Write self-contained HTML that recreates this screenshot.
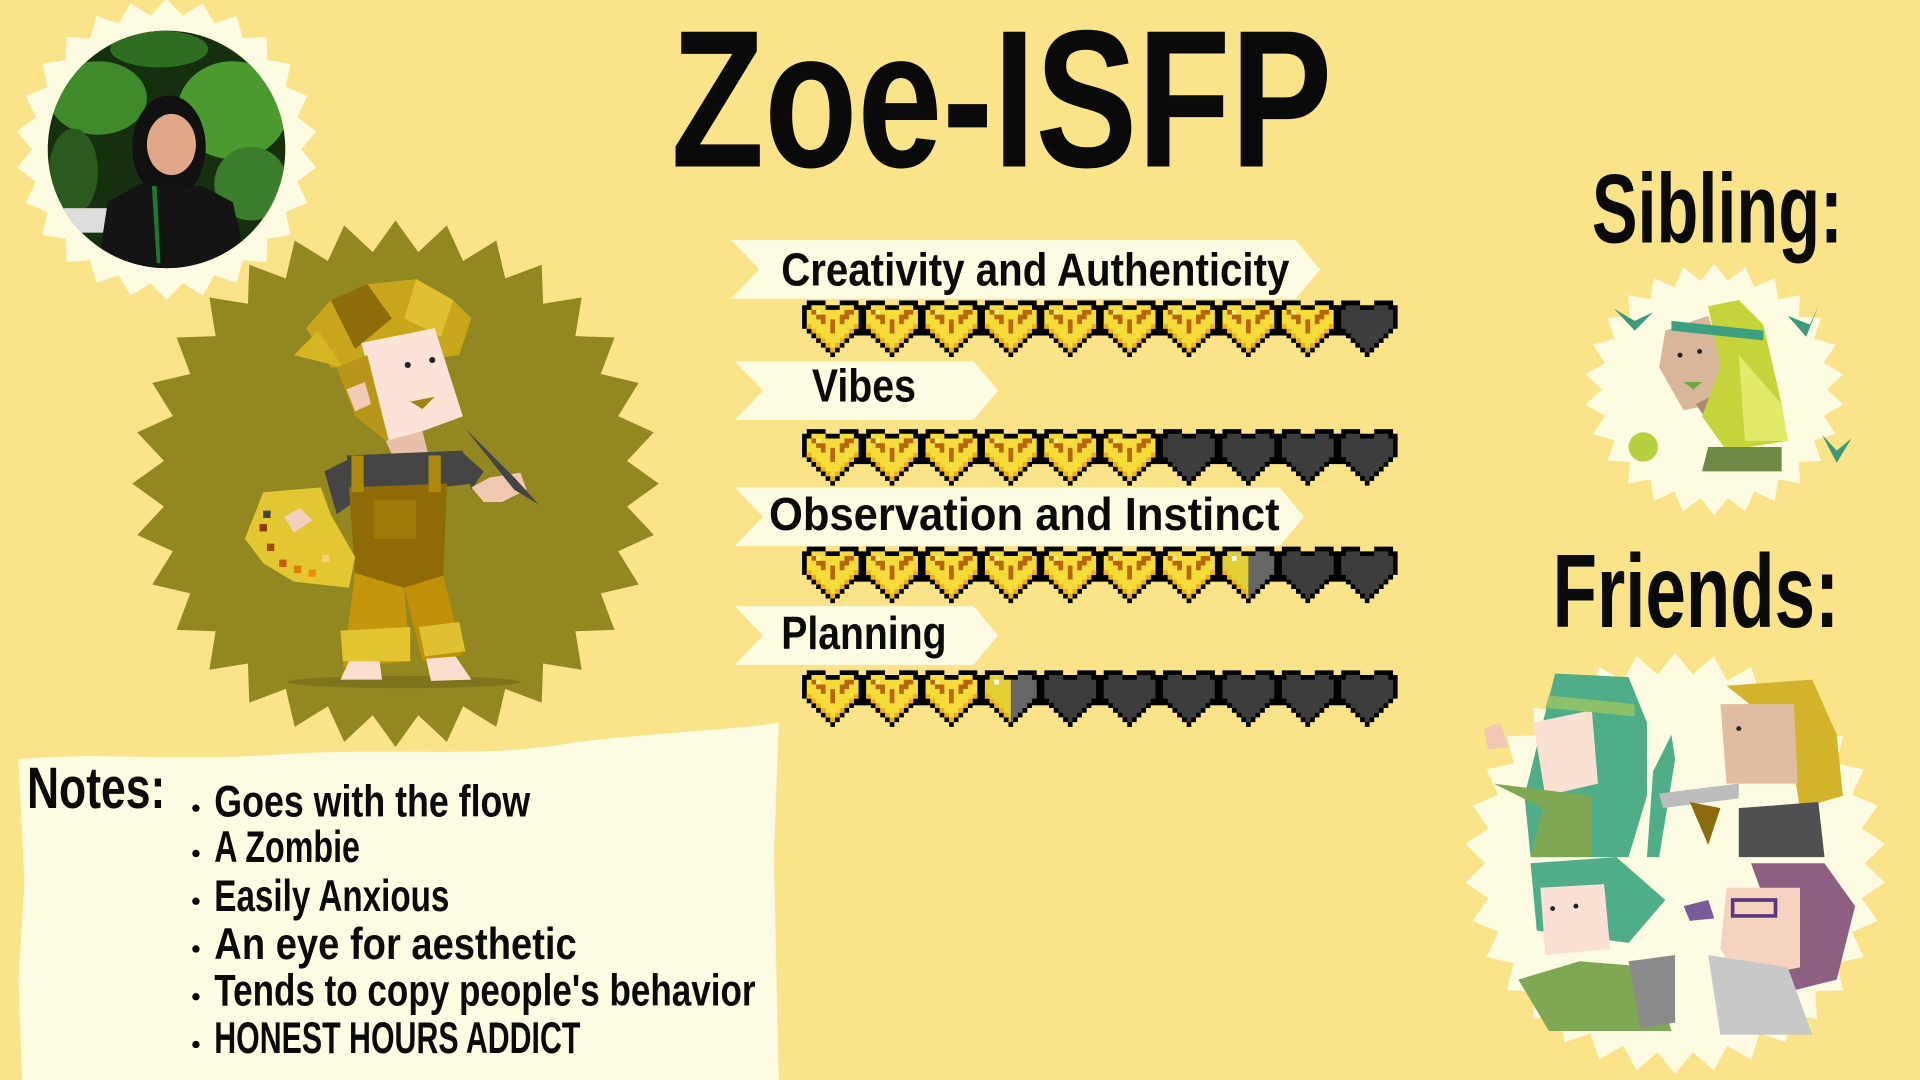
<!DOCTYPE html>
<html><head><meta charset="utf-8"><style>
html,body{margin:0;padding:0;background:#fae389;}
svg{display:block}
.h{font-family:"Liberation Sans",sans-serif;font-weight:bold;fill:#0a0a0a}
.n{font-family:"Liberation Sans",sans-serif;fill:#0a0a0a;font-weight:bold}
</style></head><body>
<svg width="1920" height="1080" viewBox="0 0 1568 882" xmlns="http://www.w3.org/2000/svg">
<defs>
<symbol id="hg" viewBox="0 0 13 12">
<path fill="#000" d="M1,0H5V1H8V0H12V1H13V6H12V7H11V8H10V9H9V10H8V11H7V12H6V11H5V10H4V9H3V8H2V7H1V6H0V1H1Z"/>
<path fill="#f6dc3a" d="M2,1H5V2H8V1H11V2H12V6H11V7H10V8H9V9H8V10H7V11H6V10H5V9H4V8H3V7H2V6H1V2H2Z"/>
<path fill="#efb012" d="M1,5H2V6H3V7H4V8H5V9H6V10H7V9H8V8H9V7H10V6H11V5H12V6H11V7H10V8H9V9H8V10H7V11H6V10H5V9H4V8H3V7H2V6H1Z"/>
<path fill="#b8660c" d="M2,2H4V3H5V5H4V4H3V3H2Z M11,2H9V3H8V5H9V4H10V3H11Z M6,4H7V7H6Z"/>
<rect x="3" y="2" width="1" height="1" fill="#fff27a"/>
</symbol>
<symbol id="hd" viewBox="0 0 13 12">
<path fill="#000" d="M1,0H5V1H8V0H12V1H13V6H12V7H11V8H10V9H9V10H8V11H7V12H6V11H5V10H4V9H3V8H2V7H1V6H0V1H1Z"/>
<path fill="#3d3d3d" d="M2,1H5V2H8V1H11V2H12V6H11V7H10V8H9V9H8V10H7V11H6V10H5V9H4V8H3V7H2V6H1V2H2Z"/>
</symbol>
<symbol id="hh" viewBox="0 0 13 12">
<path fill="#000" d="M1,0H5V1H8V0H12V1H13V6H12V7H11V8H10V9H9V10H8V11H7V12H6V11H5V10H4V9H3V8H2V7H1V6H0V1H1Z"/>
<path fill="#666" d="M2,1H5V2H8V1H11V2H12V6H11V7H10V8H9V9H8V10H7V11H6V10H5V9H4V8H3V7H2V6H1V2H2Z"/>
<path fill="#e2cf36" d="M2,1H5V2H6.5V10H5V9H4V8H3V7H2V6H1V2H2Z"/>
<path fill="#efb012" d="M1,5H2V6H3V7H4V8H5V9H6V10H6.5V11H6V10H5V9H4V8H3V7H2V6H1Z"/>
<rect x="3" y="2" width="1" height="1" fill="#fff"/>
</symbol>
<clipPath id="pc"><circle cx="136" cy="122" r="97"/></clipPath>
</defs>

<rect width="1568" height="882" fill="#fae389"/>

<polygon id="s1" fill="#fefbe3"/>
<g clip-path="url(#pc)">
<rect x="30" y="20" width="220" height="210" fill="#16300f"/>
<ellipse cx="80" cy="80" rx="40" ry="30" fill="#3f8a2a"/>
<ellipse cx="190" cy="90" rx="45" ry="40" fill="#4a9a30"/>
<ellipse cx="130" cy="40" rx="40" ry="15" fill="#2f6e22"/>
<ellipse cx="205" cy="150" rx="30" ry="30" fill="#3a7d2a"/>
<ellipse cx="60" cy="140" rx="20" ry="35" fill="#2a5a1e"/>
<rect x="52" y="170" width="40" height="20" fill="#ddd"/>
<ellipse cx="138" cy="120" rx="30" ry="42" fill="#111"/>
<ellipse cx="140" cy="118" rx="20" ry="25" fill="#e0a888"/>
<path d="M78,230 L88,165 L115,150 L165,152 L190,165 L205,230 Z" fill="#141414"/>
<path d="M124,152 L128,215 L131,215 L128,152Z" fill="#1c7a30"/>
</g>

<polygon id="s2" fill="#938721"/>
<g>
<ellipse cx="330" cy="557" rx="95" ry="5" fill="#7e741b"/>
<path d="M250,268 L270,245 L300,232 L340,228 L370,245 L385,260 L375,290 L300,300 L270,300 Z" fill="#c9a51c"/>
<path d="M270,245 L300,232 L320,260 L290,285Z" fill="#8c6d0a"/>
<path d="M340,228 L370,245 L360,275 L330,260Z" fill="#e0c030"/>
<path d="M240,290 L260,270 L280,300Z" fill="#d6b422"/>
<path d="M295,280 L355,268 L378,340 L318,362 Z" fill="#fbe3d7"/>
<path d="M275,300 L300,290 L318,362 L290,340Z" fill="#b9961a"/>
<path d="M283,318 L298,312 L303,330 L290,336Z" fill="#f1cbb5"/>
<circle cx="333" cy="298" r="2.5" fill="#222"/><circle cx="353" cy="294" r="2.5" fill="#222"/>
<path d="M335,328 L355,324 L345,334Z" fill="#a08410"/>
<path d="M315,360 L345,352 L350,372 L325,382 Z" fill="#e8bfa8"/>
<path d="M283,372 L330,370 L378,368 L385,395 L345,400 L290,400 Z" fill="#454545"/>
<path d="M265,385 L285,375 L292,408 L275,420Z" fill="#454545"/>
<path d="M378,370 L395,385 L385,400Z" fill="#454545"/>
<path d="M285,398 L365,395 L362,470 L330,480 L290,470 Z" fill="#8f6a06"/>
<rect x="287" y="372" width="10" height="30" fill="#b0890c"/>
<rect x="350" y="372" width="10" height="30" fill="#b0890c"/>
<rect x="305" y="408" width="35" height="32" fill="#a07a08"/>
<path d="M290,468 L330,480 L335,540 L280,545Z" fill="#c4960c"/>
<path d="M330,480 L362,470 L378,535 L345,540Z" fill="#c09008"/>
<path d="M278,515 L335,512 L335,540 L280,540Z" fill="#e3c430"/>
<path d="M342,512 L375,508 L380,532 L347,536Z" fill="#e0c030"/>
<path d="M285,540 L310,540 L312,555 L278,555Z" fill="#fbe0d0"/>
<path d="M348,538 L372,536 L385,555 L352,556Z" fill="#fbe0d0"/>
<path d="M385,398 L400,390 L425,386 L430,400 L410,410 L395,410Z" fill="#f3c8b0"/>
<path d="M380,350 L420,390 L440,412 L420,400Z" fill="#444"/>
<path d="M200,440 L215,402 L262,398 L270,420 L290,455 L285,480 L240,475 L215,460 Z" fill="#e2c632"/>
<g fill="#8a3a0a"><rect x="215" y="417" width="6" height="6" fill="#444"/><rect x="212" y="428" width="6" height="6"/><rect x="218" y="444" width="6" height="6" fill="#a34a05"/><rect x="228" y="457" width="6" height="6" fill="#c85a05"/><rect x="240" y="462" width="6" height="6" fill="#e07a05"/><rect x="252" y="465" width="6" height="6" fill="#f09010"/><rect x="263" y="453" width="6" height="6" fill="#f7d070"/></g>
<path d="M232,422 L245,415 L255,425 L240,435Z" fill="#f3d0c0"/>
</g>

<text class="h" x="548" y="136" font-size="160" textLength="540" lengthAdjust="spacingAndGlyphs">Zoe-ISFP</text>

<g fill="#fefbe3">
<polygon points="597,196 1058,196 1078,220 1058,244 597,244 620,220"/>
<polygon points="600,295 795,295 815,319 795,343 600,343 623,319"/>
<polygon points="600,398 1045,398 1065,422 1045,446 600,446 623,422"/>
<polygon points="600,495 795,495 815,519 795,543 600,543 623,519"/>
</g>
<text class="n" x="638" y="233" font-size="38" textLength="415" lengthAdjust="spacingAndGlyphs">Creativity and Authenticity</text>
<text class="n" x="663" y="328" font-size="38" textLength="85" lengthAdjust="spacingAndGlyphs">Vibes</text>
<text class="n" x="628" y="433" font-size="38" textLength="417" lengthAdjust="spacingAndGlyphs">Observation and Instinct</text>
<text class="n" x="638" y="530" font-size="38" textLength="135" lengthAdjust="spacingAndGlyphs">Planning</text>

<g id="hearts"></g>

<path d="M15,620 C80,614 150,622 230,616 C320,610 400,620 470,606 C540,598 600,596 636,590 L632,700 L636,882 L18,882 L15,800 L20,720 Z" fill="#fefbe3"/>
<text class="n" x="22" y="660" font-size="48" textLength="113" lengthAdjust="spacingAndGlyphs">Notes:</text>
<g class="n" font-size="36">
<circle cx="160" cy="660" r="3" fill="#000"/><text x="175" y="667" textLength="258" lengthAdjust="spacingAndGlyphs">Goes with the flow</text>
<circle cx="160" cy="697" r="3" fill="#000"/><text x="175" y="704" textLength="119" lengthAdjust="spacingAndGlyphs">A Zombie</text>
<circle cx="160" cy="736" r="3" fill="#000"/><text x="175" y="744" textLength="192" lengthAdjust="spacingAndGlyphs">Easily Anxious</text>
<circle cx="160" cy="775" r="3" fill="#000"/><text x="175" y="783" textLength="296" lengthAdjust="spacingAndGlyphs">An eye for aesthetic</text>
<circle cx="160" cy="814" r="3" fill="#000"/><text x="175" y="821" textLength="442" lengthAdjust="spacingAndGlyphs">Tends to copy people's behavior</text>
<circle cx="160" cy="853" r="3" fill="#000"/><text x="175" y="860" textLength="299" lengthAdjust="spacingAndGlyphs">HONEST HOURS ADDICT</text>
</g>

<text class="h" x="1300" y="198" font-size="80" textLength="205" lengthAdjust="spacingAndGlyphs">Sibling:</text>
<polygon id="s3" fill="#fefbe3"/>
<g>
<path d="M1360,270 L1395,258 L1410,300 L1400,330 L1375,335 L1355,300Z" fill="#d9b59a"/>
<path d="M1385,330 L1405,320 L1410,345 L1395,345Z" fill="#a88870"/>
<path d="M1395,250 L1420,245 L1440,265 L1455,330 L1460,360 L1410,368 L1390,340 L1405,300Z" fill="#c5d43a"/>
<path d="M1420,290 L1455,330 L1460,360 L1425,360Z" fill="#e2ea6a"/>
<path d="M1365,262 L1440,270 L1440,278 L1365,270Z" fill="#3aa080"/>
<path d="M1395,365 L1455,365 L1455,385 L1390,385Z" fill="#6e8a45"/>
<circle cx="1372" cy="290" r="2" fill="#222"/><circle cx="1388" cy="287" r="2" fill="#222"/>
<path d="M1375,312 L1390,312 L1383,318Z" fill="#6aaa40"/>
<path d="M1318,252 L1335,262 L1350,255 L1335,270 Z" fill="#3a9a7a"/>
<path d="M1460,258 L1478,265 L1485,250 L1475,275Z" fill="#3a9a7a"/>
<path d="M1488,355 L1500,368 L1512,358 L1500,378Z" fill="#3a9a7a"/>
<circle cx="1342" cy="365" r="12" fill="#b7d040"/>
</g>

<text class="h" x="1268" y="512" font-size="85" textLength="234" lengthAdjust="spacingAndGlyphs">Friends:</text>
<polygon id="s4" fill="#fefbe3"/>
<g>
<path d="M1270,550 L1330,553 L1345,590 L1345,650 L1330,700 L1250,700 L1245,650Z" fill="#4fae88"/>
<path d="M1252,590 L1300,580 L1305,640 L1262,650Z" fill="#fbe1d4"/>
<path d="M1265,568 L1335,575 L1335,585 L1262,578Z" fill="#8cc06a"/>
<path d="M1220,640 L1260,660 L1250,700 L1300,700 L1300,650 Z" fill="#7fa855"/>
<path d="M1212,595 L1225,590 L1232,610 L1215,612Z" fill="#f1c8b5"/>
<path d="M1350,630 L1365,600 L1368,620 L1355,700 L1345,700Z" fill="#4fae88"/>
<path d="M1410,560 L1480,555 L1500,600 L1505,650 L1470,660 L1460,600 Z" fill="#d4b22a"/>
<path d="M1405,575 L1465,575 L1468,640 L1410,640Z" fill="#e0bca0"/>
<path d="M1420,660 L1485,655 L1490,700 L1420,700Z" fill="#4e5052"/>
<path d="M1355,648 L1420,640 L1420,652 L1358,660Z" fill="#bcbcbc"/>
<path d="M1380,655 L1405,660 L1395,690Z" fill="#8c6a10"/>
<circle cx="1420" cy="595" r="2" fill="#222"/>
<path d="M1250,705 L1320,700 L1360,735 L1330,770 L1255,760Z" fill="#4fae88"/>
<path d="M1258,725 L1310,722 L1315,775 L1262,780Z" fill="#fbe1d4"/>
<path d="M1240,800 L1290,785 L1350,790 L1365,842 L1265,842Z" fill="#7fa855"/>
<path d="M1330,785 L1368,780 L1368,835 L1340,840Z" fill="#8a8a8a"/>
<circle cx="1268" cy="742" r="2" fill="#222"/><circle cx="1287" cy="740" r="2" fill="#222"/>
<path d="M1430,705 L1490,705 L1515,740 L1500,800 L1460,810 L1450,760Z" fill="#8e5f80"/>
<path d="M1410,725 L1470,725 L1470,790 L1420,800 L1405,775Z" fill="#f6d2c0"/>
<path d="M1395,780 L1460,790 L1480,845 L1405,845Z" fill="#c8c8c8"/>
<path d="M1415,735 L1450,735 L1450,748 L1415,748Z" fill="none" stroke="#5a3a7a" stroke-width="3"/>
<path d="M1375,740 L1395,735 L1400,750 L1380,752Z" fill="#7a5a9a"/>
</g>

<script>
function star(id,cx,cy,R,r,n,rot,sy){
 sy=sy||1;var p=[];for(var i=0;i<2*n;i++){var a=rot+Math.PI*i/n,rr=i%2?r:R;p.push((cx+rr*Math.sin(a)).toFixed(1)+','+(cy-rr*Math.cos(a)*sy).toFixed(1));}
 document.getElementById(id).setAttribute('points',p.join(' '));}
star('s1',136,122,123,110,26,0);
star('s2',323,395,215,190,32,0);
star('s3',1400,318,106,92,26,0,0.97);
star('s4',1368,705,172,155,34,0);
var g=document.getElementById('hearts'),ns='http://www.w3.org/2000/svg';
var rows=[[245,'gggggggggd'],[350,'ggggggdddd'],[446,'ggggggghdd'],[547,'ggghdddddd']];
rows.forEach(function(r){var s=r[1];
 var bar=document.createElementNS(ns,'rect');bar.setAttribute('x',665);bar.setAttribute('y',r[0]+14);bar.setAttribute('width',440);bar.setAttribute('height',15);bar.setAttribute('fill','#000');g.appendChild(bar);
 for(var i=0;i<10;i++){var u=document.createElementNS(ns,'use');u.setAttribute('href','#h'+s[i]);u.setAttribute('x',(655+i*48.5).toFixed(1));u.setAttribute('y',r[0]);u.setAttribute('width',50);u.setAttribute('height',47);g.appendChild(u);}
});
</script>
</svg>
</body></html>
